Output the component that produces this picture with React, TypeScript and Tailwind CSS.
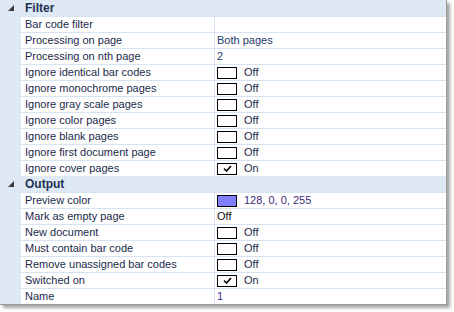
type Row = {
  name: string;
  value?: string;
  kind?: "text" | "check" | "color";
  on?: boolean;
  tone?: "blue" | "purple" | "dark";
};

const sections: { title: string; rows: Row[] }[] = [
  {
    title: "Filter",
    rows: [
      { name: "Bar code filter", value: "" },
      { name: "Processing on page", value: "Both pages" },
      { name: "Processing on nth page", value: "2" },
      { name: "Ignore identical bar codes", kind: "check", on: false },
      { name: "Ignore monochrome pages", kind: "check", on: false },
      { name: "Ignore gray scale pages", kind: "check", on: false },
      { name: "Ignore color pages", kind: "check", on: false },
      { name: "Ignore blank pages", kind: "check", on: false },
      { name: "Ignore first document page", kind: "check", on: false },
      { name: "Ignore cover pages", kind: "check", on: true },
    ],
  },
  {
    title: "Output",
    rows: [
      { name: "Preview color", kind: "color", value: "128, 0, 0, 255" },
      { name: "Mark as empty page", value: "Off", tone: "dark" },
      { name: "New document", kind: "check", on: false },
      { name: "Must contain bar code", kind: "check", on: false },
      { name: "Remove unassigned bar codes", kind: "check", on: false },
      { name: "Switched on", kind: "check", on: true },
      { name: "Name", value: "1", tone: "purple" },
    ],
  },
];

function Expander() {
  return (
    <svg width="6" height="6" viewBox="0 0 6 6" className="block">
      <path d="M6 0 L6 6 L0 6 Z" fill="#3a3a3a" />
    </svg>
  );
}

function CheckBox({ on }: { on?: boolean }) {
  return (
    <span className="flex h-[12px] w-[20px] items-center justify-center border border-black bg-white">
      {on && (
        <svg width="9" height="7" viewBox="0 0 9 7">
          <path d="M1 3.5 L3.5 6 L8 1" fill="none" stroke="#000" strokeWidth="1.6" />
        </svg>
      )}
    </span>
  );
}

function Value({ row }: { row: Row }) {
  if (row.kind === "check") {
    return (
      <div className="flex items-center gap-[7px]">
        <CheckBox on={row.on} />
        <span className="text-[#1b2a4a]">{row.on ? "On" : "Off"}</span>
      </div>
    );
  }
  if (row.kind === "color") {
    return (
      <div className="flex items-center gap-[7px]">
        <span className="h-[12px] w-[20px] border border-black bg-[#8080ff]" />
        <span className="text-[#3e2a78]">{row.value}</span>
      </div>
    );
  }
  const tone =
    row.tone === "purple" ? "text-[#4b2a8a]" : row.tone === "dark" ? "text-[#111]" : "text-[#1e3a6e]";
  return <span className={tone}>{row.value}</span>;
}

export default function App() {
  return (
    <div
      className="h-[312px] w-[454px] overflow-hidden bg-white text-[11px] leading-none"
      style={{ fontFamily: '"Liberation Sans", Arial, sans-serif' }}
    >
      <div className="w-[447px] border-r border-b border-[#9a9a9a] bg-[#dfe8f5] shadow-[3px_3px_3px_rgba(0,0,0,0.35)]">
        {sections.map((s) => (
          <div key={s.title}>
            <div className="grid h-[16px] grid-cols-[21px_1fr] items-center">
              <div className="flex justify-center pl-[1px]">
                <Expander />
              </div>
              <span className="pl-[4px] text-[12px] font-bold text-[#1e3354]">{s.title}</span>
            </div>
            {s.rows.map((r) => (
              <div key={r.name} className="grid h-[16px] grid-cols-[21px_194px_1fr]">
                <div />
                <div className="flex items-center border-t border-r border-[#d6e3f3] bg-white pl-[4px] text-[#1b2a4a]">
                  {r.name}
                </div>
                <div className="flex items-center border-t border-[#d6e3f3] bg-white pl-[2px]">
                  <Value row={r} />
                </div>
              </div>
            ))}
          </div>
        ))}
      </div>
    </div>
  );
}
